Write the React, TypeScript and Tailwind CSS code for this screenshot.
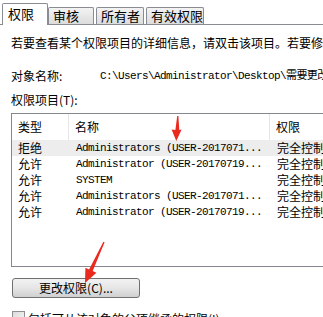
import React from 'react';

const cjk = "'Noto Sans CJK SC', 'Microsoft YaHei', sans-serif";
const mono = "'Liberation Mono', 'Noto Sans CJK SC', monospace";

const rows = [
  { type: '拒绝', name: 'Administrators (USER-2017071...', perm: '完全控制', selected: true },
  { type: '允许', name: 'Administrator (USER-20170719...', perm: '完全控制' },
  { type: '允许', name: 'SYSTEM', perm: '完全控制' },
  { type: '允许', name: 'Administrators (USER-2017071...', perm: '完全控制' },
  { type: '允许', name: 'Administrator (USER-20170719...', perm: '完全控制' },
];

function Tab({ label, width, active }: { label: string; width: string; active?: boolean }) {
  if (active) {
    return (
      <div className={`relative z-10 -mb-px h-[22px] ${width} bg-white border border-b-0 border-[#898c95] rounded-t-[2px] flex items-start pl-[5px] pt-[2px] text-[13px] leading-[16px] text-black whitespace-nowrap`}>
        {label}
      </div>
    );
  }
  return (
    <div className={`h-[17px] ${width} pl-[4px] border border-b-0 border-[#898c95] rounded-t-[2px] bg-gradient-to-b from-[#f3f3f3] to-[#dcdcdc] flex items-start text-[13px] leading-[16px] text-black whitespace-nowrap overflow-hidden`}>
      {label}
    </div>
  );
}

function Arrow({ points }: { points: string }) {
  return <polygon points={points} fill="#ea2a1f" />;
}

export default function App() {
  return (
    <div
      className="relative w-[323px] h-[317px] overflow-hidden bg-white text-black"
      style={{ fontFamily: cjk }}
    >
      {/* Tabs */}
      <div className="h-[25px] flex items-end pl-[2px] border-b border-[#898c95]">
        <Tab label="权限" width="w-[46px]" active />
        <div className="flex items-end gap-[2px]">
          <Tab label="审核" width="w-[46px]" />
          <Tab label="所有者" width="w-[48px]" />
          <Tab label="有效权限" width="w-[58px]" />
        </div>
      </div>

      {/* Panel */}
      <div className="pl-[11px] flex flex-col text-[12px] leading-[16px]">
        <div className="mt-[10px] whitespace-nowrap">
          若要查看某个权限项目的详细信息，请双击该项目。若要修改权限，请单击“更改权限”。
        </div>

        <div className="mt-[17px] flex whitespace-nowrap">
          <span className="w-[89px] shrink-0">对象名称:</span>
          <span className="text-[11px] tracking-[-0.6px]" style={{ fontFamily: mono }}>
            C:\Users\Administrator\Desktop\需要更改权限的文件夹
          </span>
        </div>

        <div className="mt-[8px]">权限项目(T):</div>

        {/* List view */}
        <div className="mt-[5px] h-[154px] w-[340px] border border-[#828790] bg-white">
          <div className="h-[26px] flex items-center">
            <div className="w-[57px] h-full pl-[6px] flex items-center border-r border-[#e5e5e5]">类型</div>
            <div className="w-[201px] h-full pl-[6px] flex items-center border-r border-[#e5e5e5]">名称</div>
            <div className="flex-1 pl-[6px] flex items-center">权限</div>
          </div>
          {rows.map((r, i) => (
            <div
              key={i}
              className={`h-[16px] flex items-center whitespace-nowrap ${r.selected ? 'bg-[#ededed]' : ''}`}
            >
              <div className="w-[57px] pl-[6px]">{r.type}</div>
              <div
                className="w-[201px] pl-[7px] text-[11px] tracking-[-0.6px]"
                style={{ fontFamily: mono }}
              >
                {r.name}
              </div>
              <div className="flex-1 pl-[7px]">{r.perm}</div>
            </div>
          ))}
        </div>

        {/* Button */}
        <button
          type="button"
          className="mt-[11px] ml-[1px] h-[20px] w-[128px] rounded-[3px] border border-[#707070] bg-gradient-to-b from-[#f2f2f2] via-[#e6e6e6] to-[#d0d0d0] flex items-center justify-center text-[12px] leading-[16px]"
        >
          更改权限(C)...
        </button>

        {/* Inherit checkbox */}
        <div className="mt-[13px] ml-[1px] flex items-start gap-[3px] whitespace-nowrap">
          <div className="w-[13px] h-[13px] border border-[#8f8f8f] bg-gradient-to-br from-[#dcdcdc] to-[#f8f8f8]" />
          <span>包括可从该对象的父项继承的权限(I)</span>
        </div>
      </div>

      {/* Red arrows */}
      <svg className="absolute inset-0 pointer-events-none" width="323" height="317">
        <Arrow points="177.2,116 178.4,116 179.3,130 181.6,129.5 176.3,141 171.6,129.5 175.4,130" />
        <Arrow points="104.6,242.2 92.7,271.1 96.4,272.8 85,283 85.4,267.8 89.1,269.5 103.4,241.7" />
      </svg>
    </div>
  );
}
